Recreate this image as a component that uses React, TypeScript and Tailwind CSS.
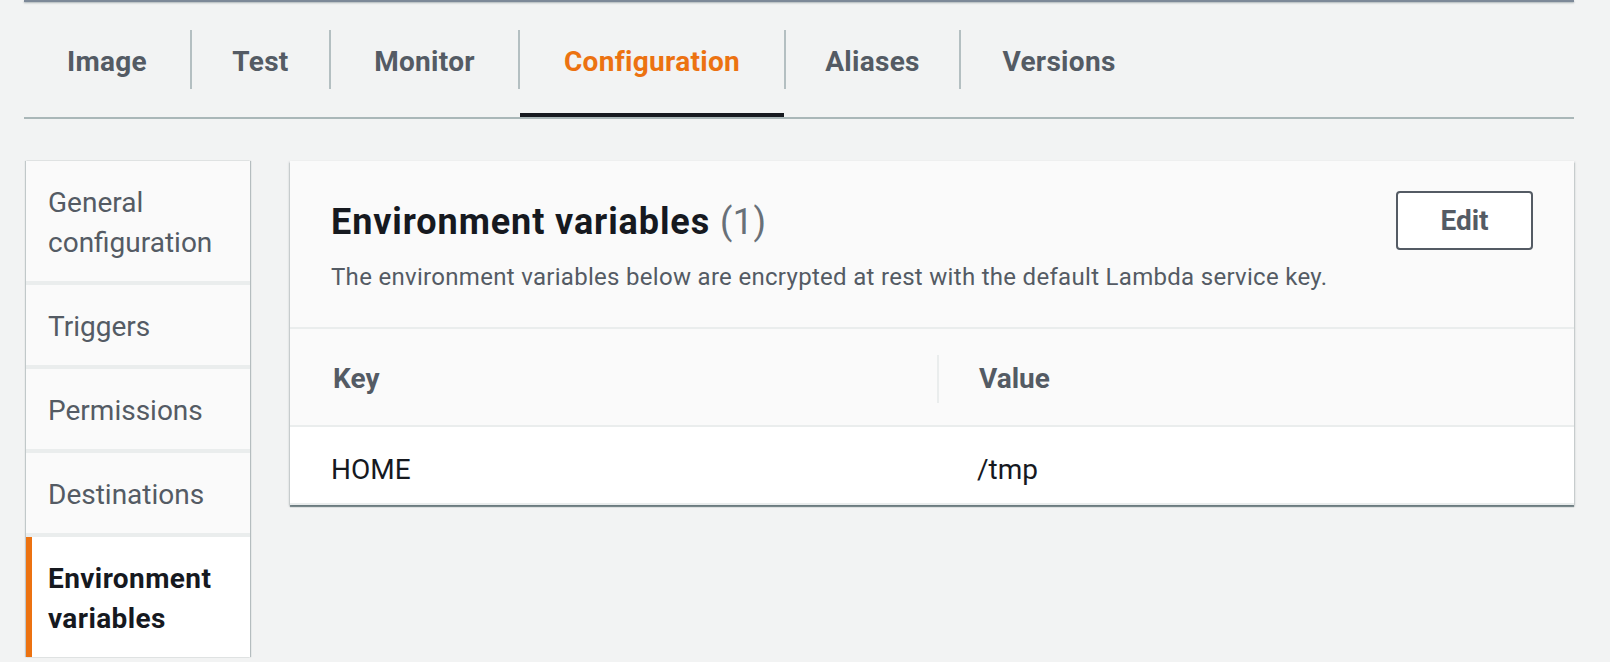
import React from 'react';

type Tab = { key: string; label: string; width: string };

const TABS: Tab[] = [
  { key: 'image', label: 'Image', width: 'w-[166px]' },
  { key: 'test', label: 'Test', width: 'w-[137px]' },
  { key: 'monitor', label: 'Monitor', width: 'w-[187px]' },
  { key: 'configuration', label: 'Configuration', width: 'w-[264px]' },
  { key: 'aliases', label: 'Aliases', width: 'w-[173px]' },
  { key: 'versions', label: 'Versions', width: 'w-[196px]' },
];

const NAV = [
  { key: 'general', label: 'General configuration' },
  { key: 'triggers', label: 'Triggers' },
  { key: 'permissions', label: 'Permissions' },
  { key: 'destinations', label: 'Destinations' },
  { key: 'env', label: 'Environment variables' },
];

const VARS = [{ key: 'HOME', value: '/tmp' }];

const App: React.FC = () => {
  const [tab, setTab] = React.useState('configuration');
  const [nav, setNav] = React.useState('env');

  return (
    <div className="min-h-screen bg-[#f2f3f3] pl-[24px] pr-[36px] font-['Roboto','Liberation_Sans',sans-serif]">
      {/* bottom edge of the panel above */}
      <div className="h-[2px] bg-[#7d8998] shadow-[0_1px_2px_rgba(0,28,36,0.3)]" />

      {/* Tabs */}
      <div className="flex items-center border-b-2 border-[#aab7b8]">
        {TABS.map((t, i) => {
          const active = tab === t.key;
          return (
            <React.Fragment key={t.key}>
              {i > 0 && <div className="w-[2px] h-[59px] bg-[#b4bfc1]" />}
              <button
                onClick={() => setTab(t.key)}
                className={`${t.width} h-[115px] pt-[8px] text-center text-[28px] font-bold tracking-[0.3px] border-b-4 ${active ? 'text-[#ec7211] border-[#16191f]' : 'text-[#545b64] border-transparent'}`}
              >
                {t.label}
              </button>
            </React.Fragment>
          );
        })}
      </div>

      <div className="flex items-start gap-[40px] pt-[42px]">
        {/* Side navigation */}
        <div className="w-[224px] ml-[2px] flex flex-col gap-[4px] bg-[#eaeded] shadow-[1px_0_1px_rgba(0,28,36,0.25),-1px_0_1px_rgba(0,28,36,0.2)]">
          {NAV.map((n) => {
            const active = nav === n.key;
            return (
              <button
                key={n.key}
                onClick={() => setNav(n.key)}
                className={`relative text-left pt-[22px] pb-[18px] pl-[22px] pr-[8px] text-[28px] leading-[40px] ${active ? 'bg-white text-[#16191f] font-bold tracking-[0.4px]' : 'bg-[#fafafa] text-[#545b64]'}`}
              >
                {active && <span className="absolute left-0 top-0 bottom-0 w-[6px] bg-[#ec7211]" />}
                {n.label}
              </button>
            );
          })}
        </div>

        {/* Card */}
        <div className="flex-1 bg-white shadow-[0_2px_1px_0_rgba(0,28,36,0.45),1px_1px_2px_0_rgba(0,28,36,0.15),-1px_1px_2px_0_rgba(0,28,36,0.15)]">
          <div className="bg-[#fafafa] pt-[30px] pb-[34px] px-[41px] border-b-2 border-[#eaeded]">
            <div className="flex items-center justify-between">
              <h2 className="mt-[2px] text-[36px] leading-[44px] font-bold tracking-[0.9px] text-[#16191f]">
                Environment variables <span className="font-normal tracking-[0.5px] text-[#687078]">(1)</span>
              </h2>
              <button className="h-[59px] w-[137px] rounded-[4px] border-2 border-[#545b64] bg-white text-[28px] font-bold text-[#545b64]">
                Edit
              </button>
            </div>
            <p className="mt-[11px] text-[24px] leading-[32px] tracking-[0.3px] text-[#545b64]">
              The environment variables below are encrypted at rest with the default Lambda service key.
            </p>
          </div>

          {/* Table */}
          <div className="flex items-center h-[98px] pt-[4px] bg-[#fafafa] border-b-2 border-[#eaeded] text-[28px] font-bold text-[#545b64]">
            <div className="w-[647px] pl-[43px]">Key</div>
            <div className="w-[2px] h-[48px] bg-[#eaeded]" />
            <div className="flex-1 pl-[40px]">Value</div>
          </div>
          {VARS.map((v) => (
            <div key={v.key} className="flex items-center h-[78px] pt-[9px] border-b-2 border-[#eaeded] text-[28px] text-[#16191f]">
              <div className="w-[649px] pl-[41px]">{v.key}</div>
              <div className="flex-1 pl-[38px]">{v.value}</div>
            </div>
          ))}
        </div>
      </div>
    </div>
  );
};

export default App;
